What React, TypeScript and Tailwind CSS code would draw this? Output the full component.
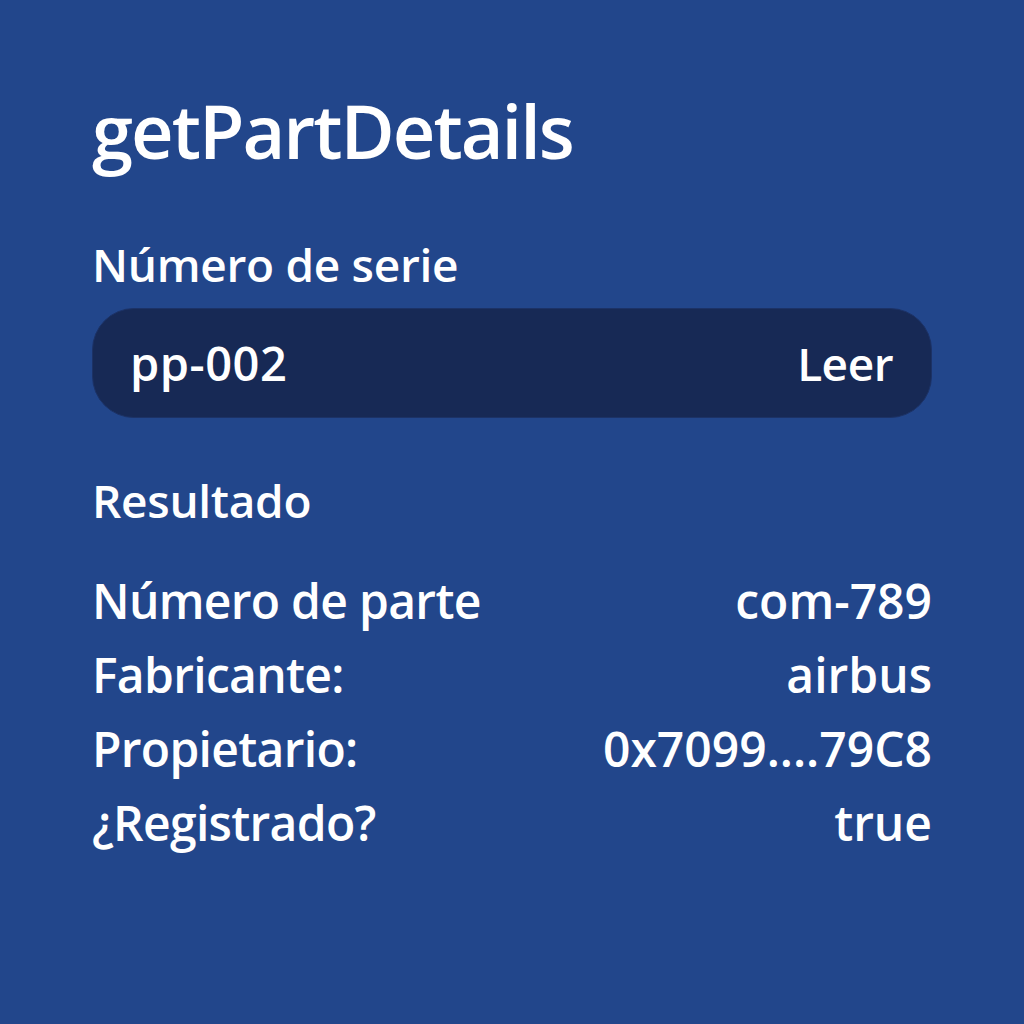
const rows = [
  { label: "Número de parte", value: "com-789" },
  { label: "Fabricante:", value: "airbus" },
  { label: "Propietario:", value: "0x7099....79C8" },
  { label: "¿Registrado?", value: "true" },
];

export default function App() {
  return (
    <div
      className="w-[1024px] h-[1024px] bg-[#22468b] text-white font-semibold px-[92px] pt-[86px]"
      style={{ fontFamily: '"Open Sans", "Noto Sans", sans-serif' }}
    >
      <h1 className="text-[74px] leading-[90px] tracking-[-2px]">getPartDetails</h1>
      <div className="mt-[60px] text-[46px] leading-[56px] tracking-[-0.3px]">Número de serie</div>
      <div className="mt-[16px] h-[110px] rounded-[42px] bg-[#172955] border border-[#1c3266] flex items-center justify-between pl-[37px] pr-[38px]">
        <span className="text-[47px] tracking-[0.5px]">pp-002</span>
        <button className="text-[46px] tracking-[-0.5px]">Leer</button>
      </div>
      <div className="mt-[54px] text-[46px] leading-[56px] tracking-[-0.3px]">Resultado</div>
      <div className="mt-[36px] flex flex-col">
        {rows.map((r) => (
          <div key={r.label} className="flex justify-between text-[48px] leading-[74px] tracking-[-0.7px]">
            <span>{r.label}</span>
            <span className="tracking-[0px]">{r.value}</span>
          </div>
        ))}
      </div>
    </div>
  );
}
